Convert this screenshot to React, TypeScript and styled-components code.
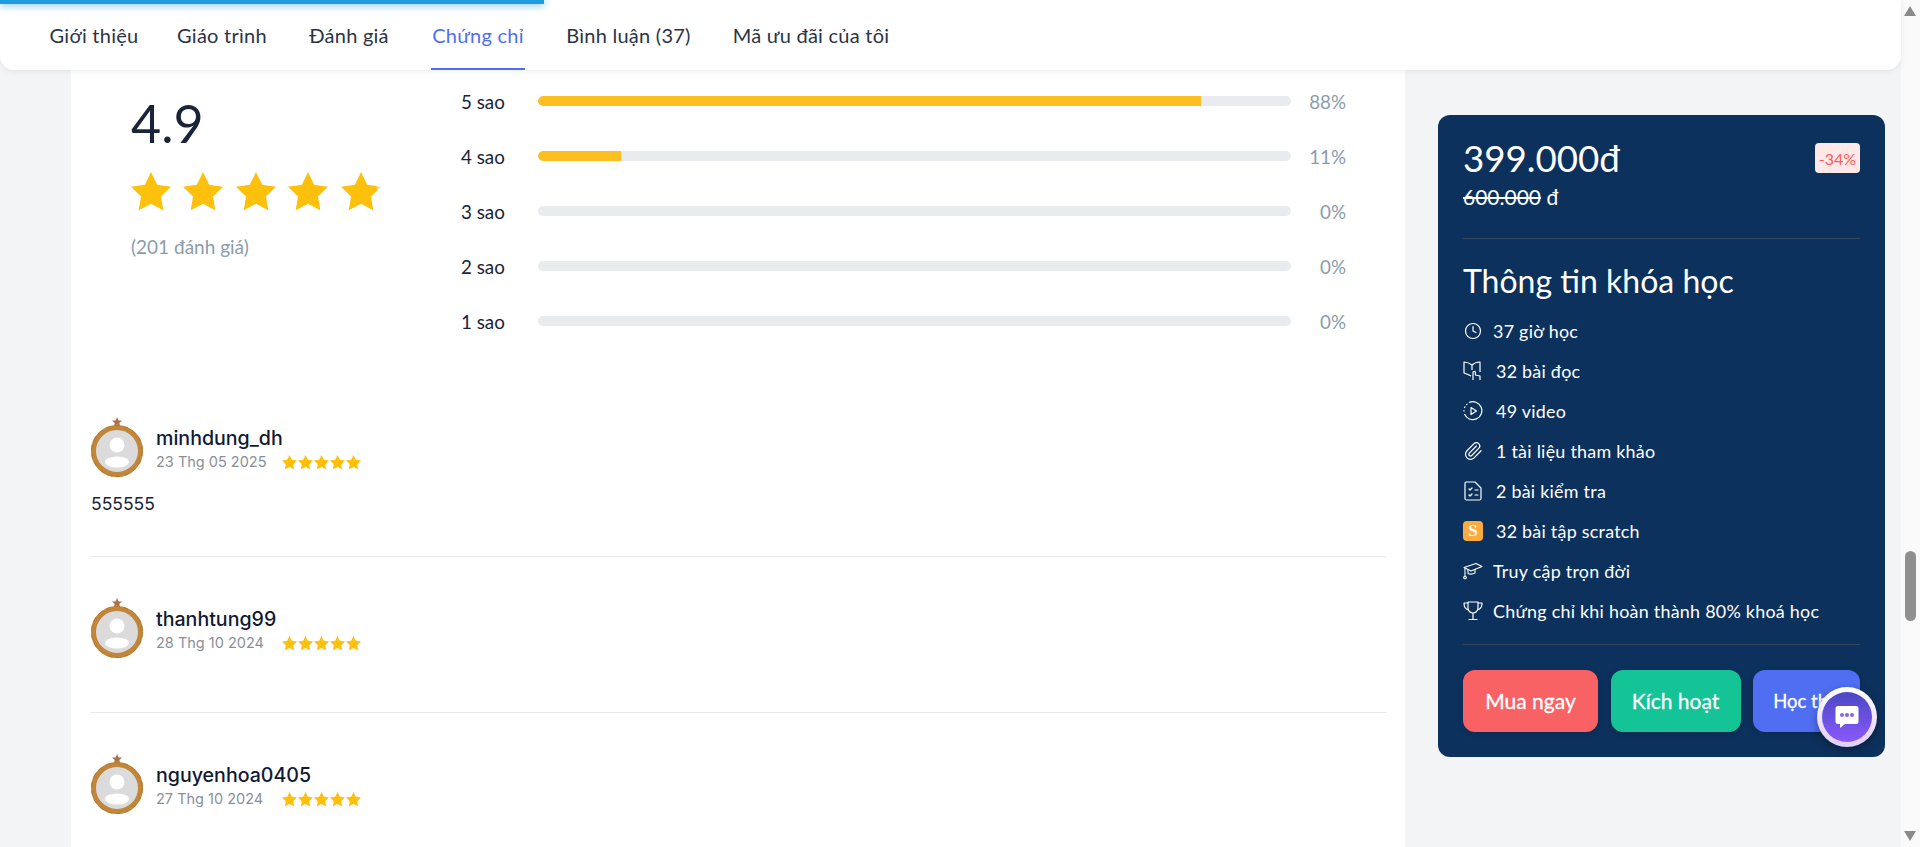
import React from "react";
import styled, { createGlobalStyle } from "styled-components";
import { Clock, Paperclip } from "lucide-react";

const GlobalStyle = createGlobalStyle`
  html, body {
    margin: 0;
    padding: 0;
    height: 100%;
    overflow: hidden;
    background: #f3f4f6;
    font-family: "Lato", "Open Sans", sans-serif;
  }
  * { box-sizing: border-box; }
`;

const Shell = styled.div`
  display: flex;
  height: 847px;
  overflow: hidden;
`;

const Main = styled.div`
  position: relative;
  width: 1901px;
  display: flex;
  flex-direction: column;
`;

const Progress = styled.div`
  position: absolute;
  top: 0;
  left: 0;
  width: 544px;
  height: 4px;
  background: #1f9ce0;
  box-shadow: 0 0 8px #1f9ce0;
  z-index: 3;
`;

const TabBar = styled.nav`
  position: relative;
  z-index: 2;
  flex: none;
  height: 70px;
  display: flex;
  gap: 40px;
  padding-left: 51px;
  background: #fff;
  border-radius: 0 0 14px 14px;
  box-shadow: 0 1px 6px rgba(0, 0, 0, 0.08);
`;

const Tab = styled.div<{ $active?: boolean; $width: number }>`
  width: ${(props) => props.$width}px;
  height: 70px;
  display: flex;
  align-items: center;
  justify-content: center;
  padding-top: 2px;
  font-size: 20px;
  letter-spacing: 0.25px;
  white-space: nowrap;
  color: ${(props) => (props.$active ? "#4f6ef2" : "#2b3445")};
  border-bottom: 2px solid ${(props) => (props.$active ? "#4f6ef2" : "transparent")};
`;

const Body = styled.div`
  flex: 1;
  min-height: 0;
  display: flex;
  padding-left: 71px;
`;

const Content = styled.main`
  width: 1334px;
  background: #fff;
  padding: 0 19px 0 20px;
`;

const Summary = styled.section`
  display: flex;
  height: 310px;
`;

const ScoreBox = styled.div`
  width: 370px;
  padding: 21px 0 0 40px;
`;

const Score = styled.div`
  font-size: 52px;
  line-height: 64px;
  color: #1a2438;
`;

const BigStars = styled.div`
  display: flex;
  gap: 12.4px;
  margin-top: 17px;
`;

const Muted = styled.div`
  margin-top: 25px;
  font-size: 19px;
  line-height: 24px;
  color: #8b9cab;
`;

const Bars = styled.div`
  flex: 1;
  display: flex;
  flex-direction: column;
  gap: 35px;
  padding-top: 21px;
`;

const BarRow = styled.div`
  display: flex;
  align-items: center;
  height: 20px;
  font-size: 18.8px;
`;

const BarLabel = styled.span`
  width: 77px;
  color: #1a2438;
`;

const Track = styled.div`
  width: 753px;
  height: 10px;
  border-radius: 5px;
  background: #e9ecef;
  overflow: hidden;
`;

const Fill = styled.div`
  height: 100%;
  background: #fdbe22;
  border-radius: 5px 0 0 5px;
`;

const Percent = styled.span`
  width: 55px;
  text-align: right;
  color: #8b9cab;
`;

const Review = styled.article<{ $first?: boolean }>`
  height: ${(props) => (props.$first ? "177px" : "156px")};
  border-bottom: 1px solid #e6e8eb;
  padding-top: ${(props) => (props.$first ? "35px" : "39px")};
`;

const ReviewHead = styled.div`
  display: flex;
  align-items: flex-start;
  gap: 13px;
`;

const ReviewMeta = styled.div`
  padding-top: 11px;
`;

const Name = styled.div`
  font-family: "Inter", sans-serif;
  font-size: 19.6px;
  font-weight: 500;
  line-height: 24px;
  color: #101a33;
`;

const MetaRow = styled.div`
  display: flex;
  align-items: center;
  gap: 15px;
  margin-top: 2px;
`;

const DateText = styled.span`
  width: 111px;
  font-family: "Inter", sans-serif;
  font-size: 14.5px;
  line-height: 20px;
  white-space: nowrap;
  color: #8a8f99;
`;

const SmallStars = styled.div`
  display: flex;
  gap: 1px;
`;

const ReviewText = styled.p`
  margin: 16px 0 0;
  font-family: "Inter", sans-serif;
  font-size: 17.5px;
  line-height: 22px;
  color: #1a2438;
`;

const Side = styled.aside`
  flex: 1;
  padding: 45px 16px 0 33px;
`;

const Card = styled.div`
  height: 642px;
  padding: 22px 25px 0;
  border-radius: 12px;
  background: #0d315d;
  color: #fff;
`;

const PriceRow = styled.div`
  display: flex;
  justify-content: space-between;
  align-items: flex-start;
`;

const Price = styled.div`
  font-size: 36.7px;
  line-height: 42px;
`;

const Discount = styled.span`
  margin-top: 6px;
  width: 45px;
  height: 30px;
  display: flex;
  align-items: center;
  justify-content: center;
  border-radius: 4px;
  background: #fee8e8;
  color: #fa5c5c;
  font-size: 16px;
`;

const OldPrice = styled.div`
  margin-top: 6px;
  font-size: 21px;
  line-height: 24px;
`;

const Line = styled.hr`
  margin: 0;
  border: 0;
  height: 1px;
  background: #36485f;
`;

const PriceLine = styled(Line)`
  margin-top: 29px;
`;

const Title = styled.h2`
  margin: 22px 0 0;
  font-size: 32px;
  font-weight: 400;
  line-height: 40px;
`;

const Facts = styled.ul`
  list-style: none;
  margin: 10px 0 0;
  padding: 0;
`;

const Fact = styled.li<{ $gap: number }>`
  display: flex;
  align-items: center;
  gap: ${(props) => props.$gap}px;
  height: 40px;
  font-size: 17.9px;
  letter-spacing: 0.25px;
  white-space: nowrap;
`;

const IconSlot = styled.span`
  width: 20px;
  height: 20px;
  flex: none;
  display: flex;
  align-items: center;
  justify-content: center;
`;

const ScratchIcon = styled.span`
  width: 20px;
  height: 20px;
  border-radius: 4px;
  background: #fdab3d;
  display: flex;
  align-items: center;
  justify-content: center;
  font-family: "Liberation Serif", serif;
  font-size: 17px;
  font-weight: 700;
`;

const FactsLine = styled(Line)`
  margin-top: 12.5px;
`;

const Actions = styled.div`
  display: flex;
  gap: 12.5px;
  margin-top: 25px;
`;

const Action = styled.button<{ $bg: string; $width: number; $size?: number }>`
  width: ${(props) => props.$width}px;
  height: 62px;
  flex: none;
  border: 0;
  padding: 0;
  border-radius: 12px;
  background: ${(props) => props.$bg};
  color: #fff;
  font-family: inherit;
  font-size: ${(props) => props.$size ?? 21}px;
  -webkit-text-stroke: 0.3px #fff;
  white-space: nowrap;
  overflow: hidden;
  box-shadow: 0 2px 6px rgba(0, 0, 0, 0.15);
`;

const ChatBubble = styled.div`
  position: absolute;
  left: 1817px;
  top: 687px;
  width: 60px;
  height: 60px;
  padding: 5px;
  border-radius: 50%;
  background: linear-gradient(180deg, #ffffff 0%, #e2cdf8 100%);
  box-shadow: 0 3px 8px rgba(0, 0, 0, 0.35);
  z-index: 3;
`;

const ChatInner = styled.div`
  width: 100%;
  height: 100%;
  border-radius: 50%;
  display: flex;
  align-items: center;
  justify-content: center;
  background: linear-gradient(180deg, #4a48c4 0%, #8a58fa 100%);
`;

const ScrollBar = styled.div`
  position: relative;
  width: 19px;
  background: #fafafa;
`;

const ScrollThumb = styled.div`
  position: absolute;
  top: 551px;
  left: 4px;
  width: 11px;
  height: 70px;
  border-radius: 6px;
  background: #8f8f8f;
`;

const ArrowUp = styled.div`
  position: absolute;
  top: 6px;
  left: 3px;
  width: 0;
  height: 0;
  border-left: 6.5px solid transparent;
  border-right: 6.5px solid transparent;
  border-bottom: 10px solid #8a8a8a;
`;

const ArrowDown = styled.div`
  position: absolute;
  bottom: 6px;
  left: 3px;
  width: 0;
  height: 0;
  border-left: 6.5px solid transparent;
  border-right: 6.5px solid transparent;
  border-top: 10px solid #8a8a8a;
`;

const Star = ({ size, partial }: { size: number; partial?: boolean }) => (
  <svg width={size} height={size * 0.96} viewBox="0 0 24 23" fill={partial ? "url(#partialStar)" : "#fdc00c"}>
    {partial && (
      <defs>
        <linearGradient id="partialStar" x1="0" y1="0" x2="1" y2="0">
          <stop offset="0.9" stopColor="#fdc00c" />
          <stop offset="0.9" stopColor="#d5dbe6" />
        </linearGradient>
      </defs>
    )}
    <path d="M12 0l3.7 7.600 8.300 1.200-6 5.900 1.400 8.300-7.400-4-7.400 4 1.400-8.300-6-5.900 8.300-1.200z" />
  </svg>
);

const Medal = () => (
  <svg width="52" height="62" viewBox="0 0 52 62" style={{ flex: "none" }}>
    <path d="M26 2l1.500 3.400 3.600.2-2.800 2.300.9 3.500-3.200-1.900-3.200 1.900.9-3.500-2.800-2.300 3.600-.2z" fill="#a9714a" />
    <circle cx="26" cy="36" r="23.500" fill="#dbdbdb" stroke="#c1863a" strokeWidth="5" />
    <circle cx="26" cy="36" r="25.500" fill="none" stroke="#a96e2a" strokeWidth="0.700" strokeDasharray="5 4" />
    <circle cx="26" cy="30" r="7.500" fill="#fff" />
    <ellipse cx="26" cy="47" rx="12" ry="5.500" fill="#fff" />
  </svg>
);

const BookIcon = () => (
  <svg width="20" height="20" viewBox="0 0 20 20" fill="none" stroke="#fff" strokeWidth="1.200" strokeLinejoin="round">
    <path d="M9 4C7 2.500 4 1.200 1 1v11l4 1.500 3 1.500" />
    <path d="M9 4c1.500-1.500 4.500-2.800 8-3v10" />
    <path d="M9 4v5" />
    <path d="M10 19v-7.500a1.200 1.200 0 0 1 2.400 0v2.500l4.600 1v4" />
  </svg>
);

const VideoIcon = () => (
  <svg width="20" height="20" viewBox="0 0 20 20" fill="none" stroke="#fff" strokeWidth="1.200" strokeLinejoin="round">
    <path d="M6 1.500A9 9 0 1 1 1.500 13" />
    <path d="M1 10v-.5M1.600 6.500l.3-.6M3.500 3.600l.5-.4" strokeLinecap="round" />
    <path d="M8 6.500l5.500 3.500-5.500 3.500z" />
  </svg>
);

const QuizIcon = () => (
  <svg width="20" height="20" viewBox="0 0 20 20" fill="none" stroke="#fff" strokeWidth="1.200" strokeLinecap="round" strokeLinejoin="round">
    <path d="M3 1h9l6 6v10.500a1.500 1.500 0 0 1-1.500 1.500h-13A1.500 1.500 0 0 1 2 17.500V2.500A1.500 1.500 0 0 1 3 1z" />
    <path d="M6 8l1 1 2-2M6 14l1 1 2-2M12 9h3M12 14h3" />
  </svg>
);

const CapIcon = () => (
  <svg width="20" height="18" viewBox="0 0 20 18" fill="none" stroke="#fff" strokeWidth="1.100" strokeLinejoin="round">
    <path d="M1 5.500L13 1.500l6 3-11 4.500z" />
    <path d="M5 7.500v4c2 .8 4.500 .8 7-.5V7" />
    <path d="M2 6v8" />
    <circle cx="2" cy="15.500" r="1.300" />
  </svg>
);

const TrophyIcon = () => (
  <svg width="20" height="20" viewBox="0 0 20 20" fill="none" stroke="#fff" strokeWidth="1.200" strokeLinejoin="round">
    <path d="M5 1h10v6a5 5 0 0 1-10 0z" />
    <path d="M5 2H1c0 4 1.500 6.500 5 7M15 2h4c0 4-1.500 6.500-5 7" />
    <path d="M10 12v6M5.500 18.500h9" />
  </svg>
);

const ChatIcon = () => (
  <svg width="26" height="26" viewBox="0 0 26 26">
    <path d="M4 2h18a2.500 2.500 0 0 1 2.500 2.500v13a2.500 2.500 0 0 1-2.500 2.500H11l-5 4v-4H4a2.500 2.500 0 0 1-2.500-2.500v-13A2.500 2.500 0 0 1 4 2z" fill="#fff" />
    <circle cx="8" cy="11" r="2" fill="#8266ee" />
    <circle cx="13" cy="11" r="2" fill="#8266ee" />
    <circle cx="18" cy="11" r="2" fill="#8266ee" />
  </svg>
);

const ratings = [
  { label: "5 sao", fill: 88 },
  { label: "4 sao", fill: 11 },
  { label: "3 sao", fill: 0 },
  { label: "2 sao", fill: 0 },
  { label: "1 sao", fill: 0 },
];

const reviews = [
  { name: "minhdung_dh", date: "23 Thg 05 2025", text: "555555" },
  { name: "thanhtung99", date: "28 Thg 10 2024" },
  { name: "nguyenhoa0405", date: "27 Thg 10 2024" },
];

const tabs = [
  { label: "Giới thiệu", width: 86 },
  { label: "Giáo trình", width: 90 },
  { label: "Đánh giá", width: 84 },
  { label: "Chứng chỉ", width: 94 },
  { label: "Bình luận (37)", width: 127 },
  { label: "Mã ưu đãi của tôi", width: 158 },
];

const facts: { icon: React.ReactNode; text: string; gap: number }[] = [
  { icon: <Clock size={18} strokeWidth={1.6} />, text: "37 giờ học", gap: 10 },
  { icon: <BookIcon />, text: "32 bài đọc", gap: 13 },
  { icon: <VideoIcon />, text: "49 video", gap: 13 },
  { icon: <Paperclip size={20} strokeWidth={1.5} />, text: "1 tài liệu tham khảo", gap: 13 },
  { icon: <QuizIcon />, text: "2 bài kiểm tra", gap: 13 },
  { icon: <ScratchIcon>S</ScratchIcon>, text: "32 bài tập scratch", gap: 13 },
  { icon: <CapIcon />, text: "Truy cập trọn đời", gap: 10 },
  { icon: <TrophyIcon />, text: "Chứng chỉ khi hoàn thành 80% khoá học", gap: 10 },
];

export default function App() {
  return (
    <Shell>
      <GlobalStyle />
      <Main>
        <Progress />
        <TabBar>
          {tabs.map((tab) => (
            <Tab key={tab.label} $width={tab.width} $active={tab.label === "Chứng chỉ"}>
              {tab.label}
            </Tab>
          ))}
        </TabBar>
        <Body>
          <Content>
            <Summary>
              <ScoreBox>
                <Score>4.9</Score>
                <BigStars>
                  {[0, 1, 2, 3, 4].map((i) => (
                    <Star key={i} size={40} partial={i === 4} />
                  ))}
                </BigStars>
                <Muted>(201 đánh giá)</Muted>
              </ScoreBox>
              <Bars>
                {ratings.map((row) => (
                  <BarRow key={row.label}>
                    <BarLabel>{row.label}</BarLabel>
                    <Track>
                      <Fill style={{ width: `${row.fill}%` }} />
                    </Track>
                    <Percent>{row.fill}%</Percent>
                  </BarRow>
                ))}
              </Bars>
            </Summary>
            {reviews.map((review, i) => (
              <Review key={review.name} $first={i === 0}>
                <ReviewHead>
                  <Medal />
                  <ReviewMeta>
                    <Name>{review.name}</Name>
                    <MetaRow>
                      <DateText>{review.date}</DateText>
                      <SmallStars>
                        {[0, 1, 2, 3, 4].map((s) => (
                          <Star key={s} size={15} />
                        ))}
                      </SmallStars>
                    </MetaRow>
                  </ReviewMeta>
                </ReviewHead>
                {review.text && <ReviewText>{review.text}</ReviewText>}
              </Review>
            ))}
          </Content>
          <Side>
            <Card>
              <PriceRow>
                <Price>399.000đ</Price>
                <Discount>-34%</Discount>
              </PriceRow>
              <OldPrice>
                <s>600.000</s> đ
              </OldPrice>
              <PriceLine />
              <Title>Thông tin khóa học</Title>
              <Facts>
                {facts.map((fact) => (
                  <Fact key={fact.text} $gap={fact.gap}>
                    <IconSlot>{fact.icon}</IconSlot>
                    {fact.text}
                  </Fact>
                ))}
              </Facts>
              <FactsLine />
              <Actions>
                <Action $bg="#f96264" $width={135}>Mua ngay</Action>
                <Action $bg="#14c396" $width={130}>Kích hoạt</Action>
                <Action $bg="#4f6ef2" $width={107} $size={18.5}>Học thử</Action>
              </Actions>
            </Card>
          </Side>
        </Body>
        <ChatBubble>
          <ChatInner>
            <ChatIcon />
          </ChatInner>
        </ChatBubble>
      </Main>
      <ScrollBar>
        <ArrowUp />
        <ScrollThumb />
        <ArrowDown />
      </ScrollBar>
    </Shell>
  );
}
